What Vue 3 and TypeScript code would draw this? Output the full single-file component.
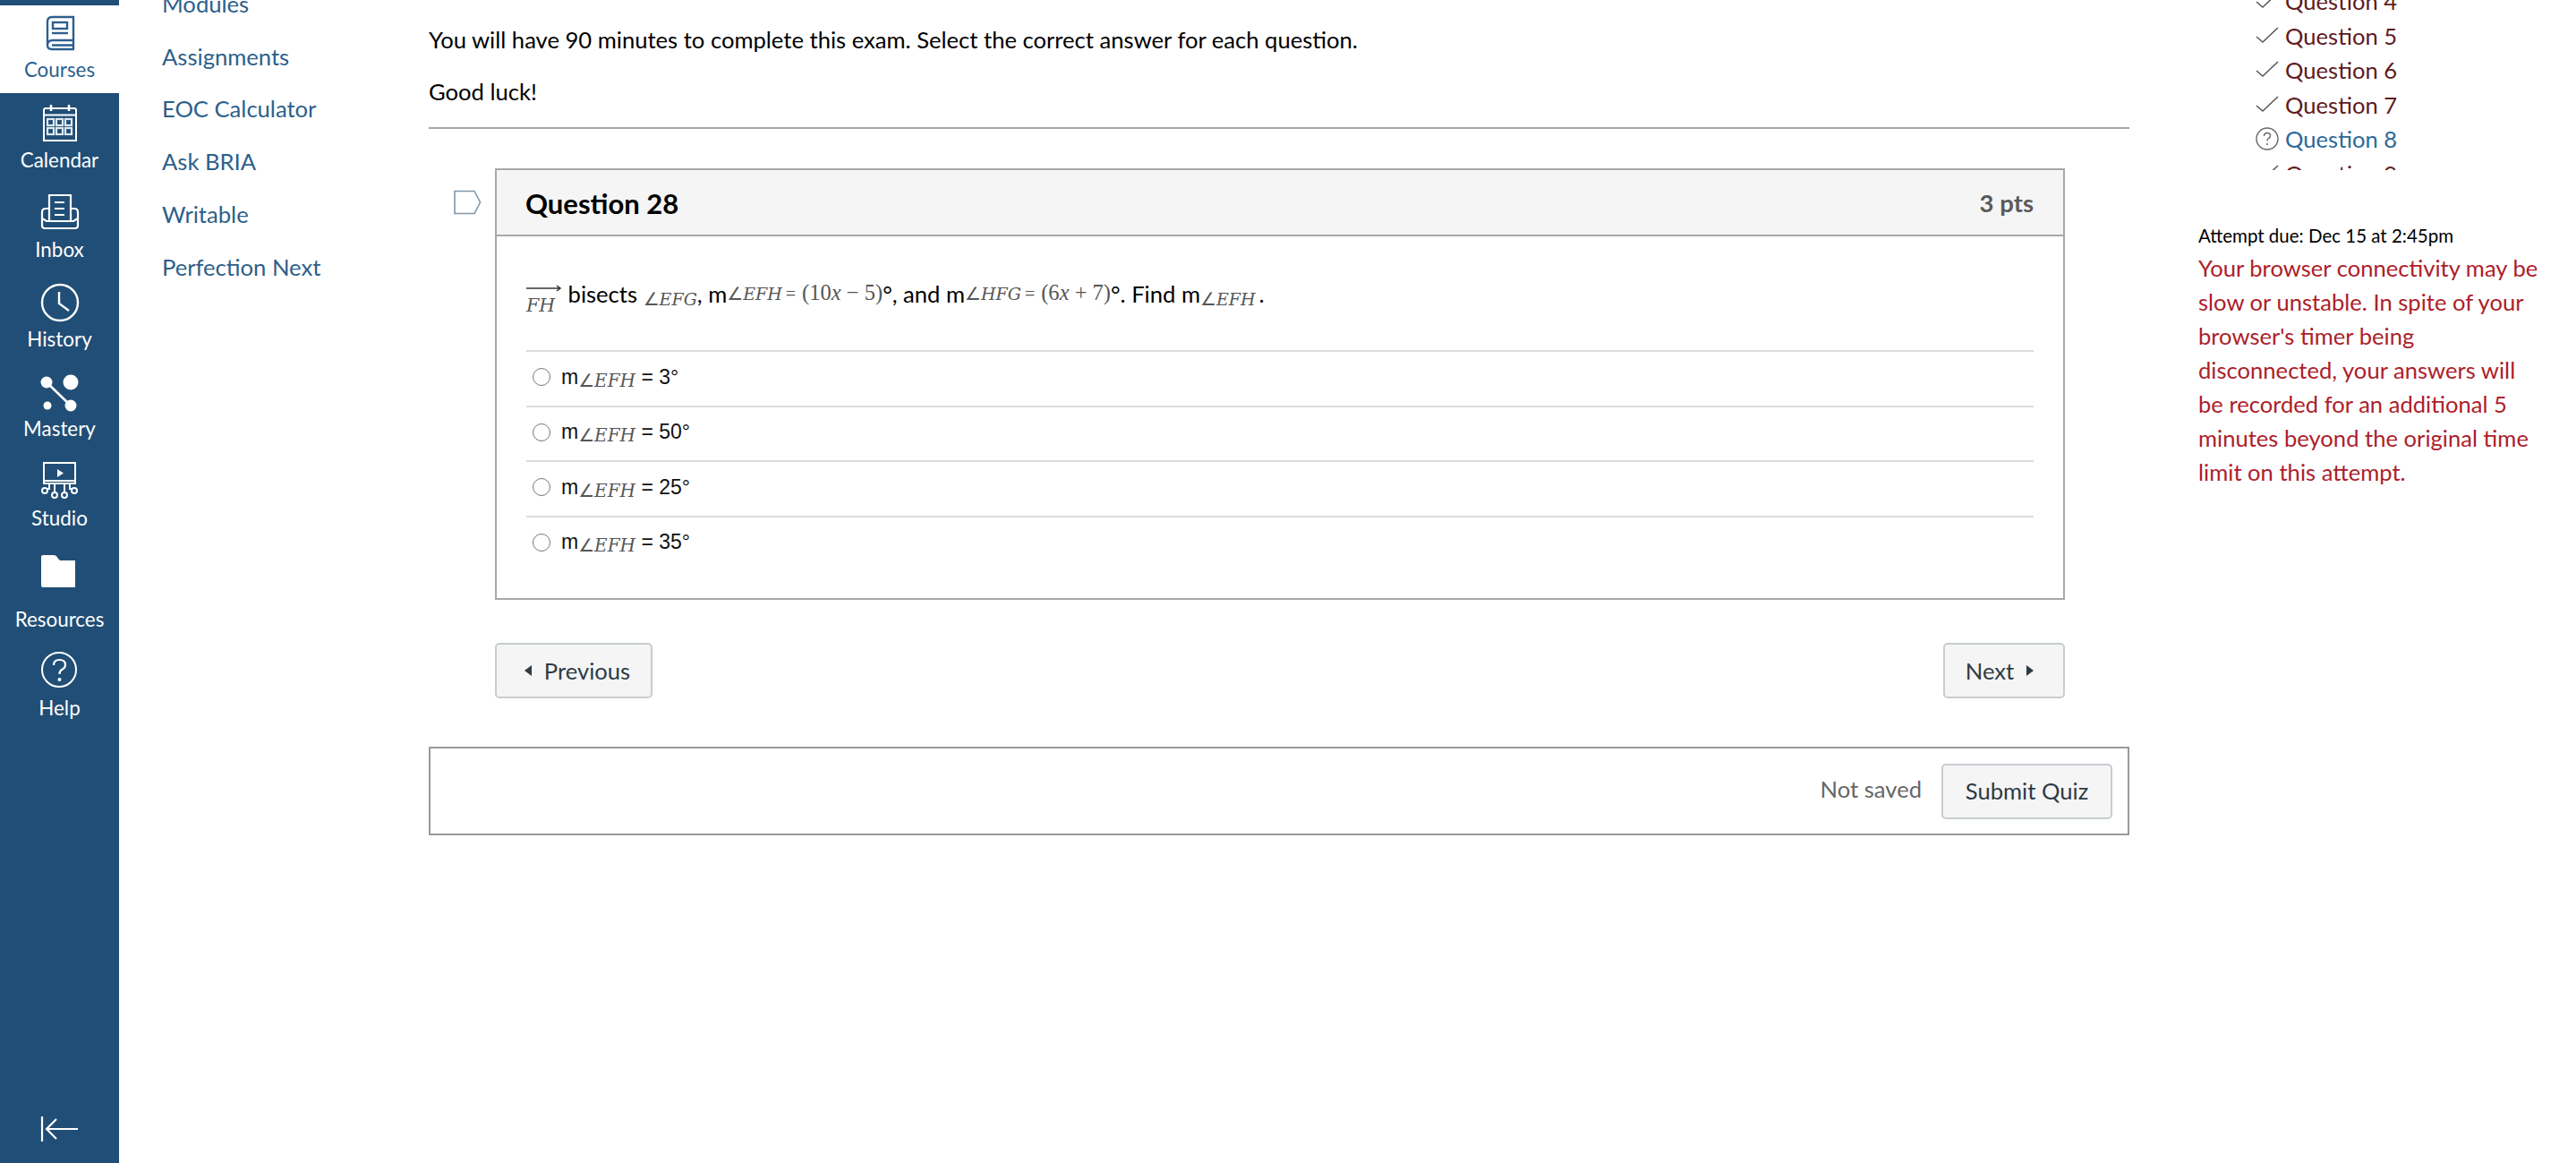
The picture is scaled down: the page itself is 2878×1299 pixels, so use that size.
<script setup lang="ts">
const courseLinks: string[] = ['Modules', 'Assignments', 'EOC Calculator', 'Ask BRIA', 'Writable', 'Perfection Next']
const answers: string[] = ['3°', '50°', '25°', '35°']
const calendarCells: { x: number; y: number }[] = [8, 18, 28].flatMap((x) => [17, 27].map((y) => ({ x, y })))
const questions: { n: number; kind: 'check' | 'help' }[] = [
  { n: 4, kind: 'check' },
  { n: 5, kind: 'check' },
  { n: 6, kind: 'check' },
  { n: 7, kind: 'check' },
  { n: 8, kind: 'help' },
  { n: 9, kind: 'check' }
]
</script>

<template>
  <div class="page">
    <aside class="rail">
      <a class="rail-item active">
        <svg class="ico" viewBox="0 0 44 44" fill="none" stroke="#2d5f8f" stroke-width="2.4">
          <path d="M8 35V8Q8 3 13 3H37V29H14Q8 29 8 34.500Q8 39 13 39H38M13 34.500H37M37 29V39" />
          <rect x="14" y="9" width="16" height="7" />
          <path d="M13 21H31" />
        </svg>
        <span>Courses</span>
      </a>
      <a class="rail-item">
        <svg class="ico" viewBox="0 0 44 44" fill="none" stroke="#fff" stroke-width="2">
          <path d="M4 41V7Q4 5 6 5H38Q40 5 40 7V41ZM4 12.500H40" />
          <path d="M12 1V8M32 1V8" stroke-width="2.600" />
          <rect v-for="(c, i) in calendarCells" :key="i" :x="c.x" :y="c.y" width="7" height="7" stroke="#dfe8ef" stroke-width="2.200" />
        </svg>
        <span>Calendar</span>
      </a>
      <a class="rail-item">
        <svg class="ico" viewBox="0 0 44 44" fill="none" stroke="#fff" stroke-width="2.2">
          <path d="M10 31V2H34V31M16 10H27M16 17H27M16 24H27" />
          <path d="M10 17H6Q2 17 2 21V36Q2 39 5 39H39Q42 39 42 36V21Q42 17 38 17H34" />
          <path d="M2 28L7 31H37L42 28" />
        </svg>
        <span>Inbox</span>
      </a>
      <a class="rail-item">
        <svg class="ico" viewBox="0 0 44 44" fill="none" stroke="#fff" stroke-width="2.4">
          <circle cx="22" cy="22" r="20" />
          <path d="M21 10V23L32 31" />
        </svg>
        <span>History</span>
      </a>
      <a class="rail-item">
        <svg class="ico" viewBox="0 0 44 44" fill="#fff">
          <circle cx="7" cy="11" r="6.500" />
          <circle cx="34" cy="11" r="8.500" />
          <circle cx="34" cy="37" r="6.500" />
          <circle cx="8" cy="37" r="4.500" />
          <path d="M7 11L34 37" fill="none" stroke="#fff" stroke-width="2.600" />
        </svg>
        <span>Mastery</span>
      </a>
      <a class="rail-item">
        <svg class="ico" viewBox="0 0 44 44" fill="none" stroke="#fff" stroke-width="2">
          <path d="M4 1H39V24H4ZM4 21H39" />
          <path d="M19 8L26 12.500L19 17Z" fill="#fff" stroke="none" />
          <path d="M16 24V33M27 24V33M10 24V30H7M33 24V30H36" />
          <circle cx="5" cy="32" r="3" />
          <circle cx="16" cy="37" r="3" />
          <circle cx="27" cy="37" r="3" />
          <circle cx="38" cy="32" r="3" />
        </svg>
        <span>Studio</span>
      </a>
      <a class="rail-item res">
        <svg class="ico" viewBox="0 0 44 44" fill="#fff">
          <path d="M1 6Q1 4 3 4H15Q18 4 20 8L22 10H39V40H3Q1 40 1 38Z" />
        </svg>
        <span>Resources</span>
      </a>
      <a class="rail-item">
        <svg class="ico" viewBox="0 0 44 44" fill="none" stroke="#fff" stroke-width="2">
          <circle cx="21" cy="20" r="19" />
          <path d="M15 15Q15 9 21.500 9Q28 9 28 14.500Q28 18 24 20Q21.500 21.500 21.500 25" stroke-width="2.200" />
          <circle cx="21.500" cy="31" r="2" fill="#fff" stroke="none" />
        </svg>
        <span>Help</span>
      </a>
      <button class="collapse" aria-label="Collapse">
        <svg width="44" height="30" viewBox="0 0 44 30" fill="none" stroke="#fff" stroke-width="2.200">
          <path d="M2 1V29M42 15H7M18 4L7 15L18 26" />
        </svg>
      </button>
    </aside>

    <nav class="course-nav">
      <a v-for="l in courseLinks" :key="l">{{ l }}</a>
    </nav>

    <main class="main">
      <p class="intro">You will have 90 minutes to complete this exam. Select the correct answer for each question.</p>
      <p class="intro luck">Good luck!</p>
      <hr class="rule" />

      <section class="question">
        <svg class="flag" width="32" height="28" viewBox="0 0 32 28" fill="#fff" stroke="#7f97ad" stroke-width="1.600">
          <path d="M2 1.500H24L30.500 14L24 26.500H2Z" />
        </svg>
        <header class="q-head">
          <h2>Question 28</h2>
          <span class="pts">3 pts</span>
        </header>
        <div class="q-body">
          <p class="q-text">
            <span class="vec"><svg width="40" height="8" viewBox="0 0 40 8" fill="none" stroke="#333" stroke-width="1.500"><path d="M0 4H38M34 1L38 4L34 7" /></svg><span class="m fh">FH</span></span>
            bisects <span class="m low"><span class="ang">∠</span>EFG</span>, m<span class="m up"><span class="ang">∠</span>EFH</span><span class="paren up eq">=</span><span class="paren up">(10<i>x</i> − 5)</span>°, and m<span class="m up"><span class="ang">∠</span>HFG</span><span class="paren up eq">=</span><span class="paren up">(6<i>x</i> + 7)</span>°. Find m<span class="m low"><span class="ang">∠</span>EFH</span><span class="stop">.</span>
          </p>
          <ul class="answers">
            <li v-for="a in answers" :key="a">
              <span class="radio"></span>
              <span class="a-text">m<span class="m low big"><span class="ang">∠</span>EFH</span> = {{ a }}</span>
            </li>
          </ul>
        </div>
      </section>

      <div class="pager">
        <button class="btn prev"><span class="tri left"></span>Previous</button>
        <button class="btn next">Next<span class="tri right"></span></button>
      </div>

      <div class="submit-bar">
        <span class="saved">Not saved</span>
        <button class="btn submit">Submit Quiz</button>
      </div>
    </main>

    <aside class="side">
      <ul class="q-list">
        <li v-for="q in questions" :key="q.n" :class="{ current: q.kind === 'help' }">
          <svg v-if="q.kind === 'check'" class="st" width="26" height="24" viewBox="0 0 26 24" fill="none" stroke="#555" stroke-width="1.500">
            <path d="M1 13L8 19L25 3" />
          </svg>
          <svg v-else class="st" width="26" height="26" viewBox="0 0 26 26" fill="none" stroke="#666" stroke-width="1.400">
            <circle cx="13" cy="13" r="12" />
            <path d="M9.500 10Q9.500 6.500 13 6.500Q16.500 6.500 16.500 9.500Q16.500 11.500 14.500 12.500Q13 13.500 13 15.500" />
            <circle cx="13" cy="19" r="1" fill="#666" stroke="none" />
          </svg>
          <span>Question {{ q.n }}</span>
        </li>
      </ul>
      <p class="due">Attempt due: Dec 15 at 2:45pm</p>
      <p class="warn">Your browser connectivity may be slow or unstable. In spite of your browser's timer being disconnected, your answers will be recorded for an additional 5 minutes beyond the original time limit on this attempt.</p>
    </aside>
  </div>
</template>

<style>
html, body { margin: 0; background: #fff; overflow: hidden; }
</style>

<style scoped>
.page {
  display: flex;
  width: 2878px;
  height: 1299px;
  overflow: hidden;
  font-family: Lato, "Liberation Sans", sans-serif;
  color: #000;
}
.rail {
  flex: 0 0 133px;
  height: 1299px;
  box-sizing: border-box;
  padding-top: 6px;
  background: #204e76;
  display: flex;
  flex-direction: column;
  color: #fff;
}
.rail-item {
  height: 100px;
  box-sizing: border-box;
  padding-top: 12px;
  display: flex;
  flex-direction: column;
  align-items: center;
  font-size: 22.400px;
  line-height: 20px;
}
.rail-item span { margin-top: 9px; }
.rail-item.active {
  height: 98px;
  padding-top: 10px;
  background: #fff;
  color: #2d5f8f;
}
.rail-item.active span { margin-top: 8px; }
.rail-item.res { height: 112px; }
.rail-item.res span { margin-top: 22px; }
.ico { width: 44px; height: 44px; display: block; }
.collapse {
  margin-top: auto;
  margin-bottom: 23px;
  align-self: center;
  padding: 0;
  border: 0;
  background: none;
  height: 30px;
}
.course-nav {
  flex: 0 0 346px;
  box-sizing: border-box;
  padding-left: 48px;
  margin-top: -25px;
  display: flex;
  flex-direction: column;
}
.course-nav a {
  font-size: 25.600px;
  line-height: 58.700px;
  color: #2d5f8a;
}
.main {
  flex: 0 0 1900px;
  box-sizing: border-box;
}
.intro {
  margin: 26px 0 0;
  font-size: 25.600px;
  line-height: 36px;
}
.luck { margin-top: 22px; }
.rule {
  margin: 22px 0 0;
  border: 0;
  border-top: 2px solid #a5a5a5;
}
.question {
  position: relative;
  margin: 44px 0 0 74px;
  width: 1754px;
  box-sizing: border-box;
  border: 2px solid #a8a8a8;
}
.flag { position: absolute; left: -49px; top: 22px; }
.q-head {
  height: 74px;
  box-sizing: border-box;
  padding: 1px 33px 0 32px;
  display: flex;
  align-items: center;
  justify-content: space-between;
  background: #f5f5f5;
  border-bottom: 2px solid #a8a8a8;
}
.q-head h2 { margin: 0; font-size: 31px; font-weight: 700; }
.pts { font-size: 27.500px; font-weight: 700; color: #5a5a5a; }
.q-body { padding: 0 33px; height: 404px; box-sizing: border-box; }
.q-text {
  margin: 0;
  height: 127px;
  box-sizing: border-box;
  padding-top: 46px;
  font-size: 25.600px;
  line-height: 36px;
  white-space: nowrap;
}
.m {
  font-family: "DejaVu Serif", serif;
  font-style: italic;
  font-size: 19px;
  color: #555;
}
.m.big { font-size: 20px; }
.ang {
  font-family: "DejaVu Sans", sans-serif;
  font-style: normal;
  font-size: 20px;
}
.paren {
  font-family: "Liberation Serif", serif;
  font-size: 24.500px;
  color: #555;
}
.eq { margin: 0 7px 0 4px; font-size: 20px; }
.stop { margin-left: 4px; }
.low { position: relative; top: 3px; }
.up { position: relative; top: -3px; }
.vec {
  position: relative;
  display: inline-block;
  width: 40px;
}
.vec svg { position: absolute; left: 0; top: 8px; }
.fh { position: relative; top: 10px; font-size: 20.500px; }
.answers { list-style: none; margin: 0; padding: 0; }
.answers li {
  height: 61.500px;
  box-sizing: border-box;
  border-top: 2px solid #dcdcdc;
  display: flex;
  align-items: center;
  padding-left: 7px;
  padding-bottom: 3px;
}
.radio {
  width: 18px;
  height: 18px;
  border: 1.500px solid #767676;
  border-radius: 50%;
  background: #fff;
  margin-right: 12px;
  flex: none;
}
.a-text { font-size: 23px; color: #111; font-family: "Liberation Sans", sans-serif; }
.pager {
  margin: 48px 0 0 74px;
  width: 1754px;
  display: flex;
  justify-content: space-between;
}
.btn {
  font-family: inherit;
  font-size: 25.600px;
  color: #2d3b45;
  background: #f5f5f5;
  border: 2px solid #c7cdd1;
  border-radius: 5px;
  box-sizing: border-box;
  height: 62px;
  padding: 0;
  display: inline-flex;
  align-items: center;
  justify-content: center;
}
.prev { width: 176px; padding-left: 8px; }
.next { width: 136px; padding-right: 10px; }
.tri { width: 0; height: 0; border-top: 6px solid transparent; border-bottom: 6px solid transparent; }
.tri.left { border-right: 8px solid #2d3b45; margin-right: 14px; }
.tri.right { border-left: 8px solid #2d3b45; margin-left: 14px; }
.submit-bar {
  margin-top: 54px;
  height: 99px;
  box-sizing: border-box;
  border: 2px solid #999;
  display: flex;
  align-items: center;
  justify-content: flex-end;
  padding: 0 17px 0 0;
}
.saved { font-size: 25.600px; color: #666; margin-right: 22px; margin-top: -6px; }
.submit { width: 191px; padding-bottom: 2px; }
.side {
  flex: 1;
  box-sizing: border-box;
  padding-left: 77px;
  min-width: 0;
}
.q-list {
  list-style: none;
  margin: -18px 0 0;
  padding: 0 0 0 64px;
  height: 208px;
  overflow: hidden;
}
.q-list li {
  height: 38.500px;
  display: flex;
  align-items: center;
  font-size: 25.600px;
  color: #5f1a20;
  white-space: nowrap;
}
.q-list li.current { color: #2d6a96; }
.st { flex: none; margin-right: 7px; }
.due {
  margin: 58px 0 0;
  font-size: 20.500px;
  line-height: 30px;
  white-space: nowrap;
}
.warn {
  margin: 2px 0 0;
  width: 385px;
  font-size: 25.600px;
  line-height: 38px;
  color: #ad2029;
}
</style>
